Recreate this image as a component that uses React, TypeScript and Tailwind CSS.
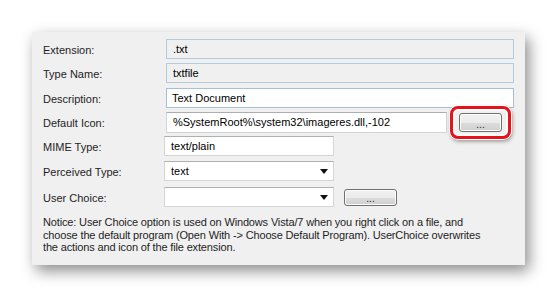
const font = { fontFamily: '"Liberation Sans", Arial, sans-serif' };

function Label({ children }: { children: string }) {
  return <div className="w-[123px] shrink-0 pt-[2px] text-[11px] text-[#1e1e1e]">{children}</div>;
}

function WinButton({ className = "" }: { className?: string }) {
  return (
    <div
      className={`flex items-end justify-center rounded-[3px] border border-[#707070] bg-[linear-gradient(#f2f2f2_0%,#ebebeb_50%,#dddddd_51%,#cfcfcf_100%)] shadow-[inset_0_0_0_1px_#fcfcfc] pb-[1px] text-[10px] leading-none text-[#222] ${className}`}
    >
      ...
    </div>
  );
}

function Arrow() {
  return (
    <svg width="8" height="5" viewBox="0 0 8 5" className="mr-[5px]">
      <path d="M0 0H8L4 5Z" fill="#111" />
    </svg>
  );
}

export default function App() {
  return (
    <div className="h-[298px] w-[557px] overflow-hidden bg-white pl-[32px] pt-[32px]" style={font}>
      <div className="flex h-[233px] w-[493px] flex-col bg-[#f0f0f0] pl-[11px] pt-[7px] shadow-[4px_6px_14px_rgba(0,0,0,0.45)]">
        {/* Extension */}
        <div className="flex h-[20px] items-center">
          <Label>Extension:</Label>
          <div className="flex h-[20px] w-[348px] items-center border border-[#b3cadf] bg-[#f0f0f0] pl-[6px] text-[11px] text-black">.txt</div>
        </div>
        {/* Type Name */}
        <div className="mt-[4px] flex h-[20px] items-center">
          <Label>Type Name:</Label>
          <div className="flex h-[20px] w-[348px] items-center border border-[#b3cadf] bg-[#f0f0f0] pl-[6px] text-[11px] text-black">txtfile</div>
        </div>
        {/* Description */}
        <div className="mt-[5px] flex h-[20px] items-center">
          <Label>Description:</Label>
          <div className="flex h-[20px] w-[348px] items-center border border-[#a7c0d8] bg-white pl-[5px] text-[11px] text-black">Text Document</div>
        </div>
        {/* Default Icon */}
        <div className="mt-[4px] flex h-[20px] items-center">
          <Label>Default Icon:</Label>
          <div className="flex h-[21px] w-[281px] items-center border border-[#cfd3da] border-t-[#abadb3] bg-white pl-[6px] text-[11px] text-black">
            %SystemRoot%\system32\imageres.dll,-102
          </div>
          <div className="-my-[7px] ml-[3px] flex h-[33px] w-[61px] items-center justify-center rounded-[8px] border-[3px] border-[#e8131a] shadow-[inset_0_0_0_2px_#ffffff,0_0_0_1px_#ffffff,1px_2px_4px_rgba(0,0,0,0.45)]">
            <WinButton className="h-[19px] w-[43px]" />
          </div>
        </div>
        {/* MIME Type */}
        <div className="mt-[4px] flex h-[20px] items-center">
          <Label>MIME Type:</Label>
          <div className="-ml-[2px] flex h-[20px] w-[170px] items-center border border-[#d5d5d5] border-t-[#b0b0b0] bg-white pl-[6px] text-[11px] text-black">text/plain</div>
        </div>
        {/* Perceived Type */}
        <div className="mt-[5px] flex h-[20px] items-center">
          <Label>Perceived Type:</Label>
          <div className="-ml-[2px] flex h-[20px] w-[170px] items-center justify-between border border-[#d5d5d5] border-t-[#b0b0b0] bg-white pl-[6px] text-[11px] text-black">
            <span>text</span>
            <Arrow />
          </div>
        </div>
        {/* User Choice */}
        <div className="mt-[6px] flex h-[20px] items-center">
          <Label>User Choice:</Label>
          <div className="-ml-[2px] flex h-[20px] w-[170px] items-center justify-end border border-[#d5d5d5] border-t-[#b0b0b0] bg-white">
            <Arrow />
          </div>
          <WinButton className="ml-[10px] h-[17px] w-[53px]" />
        </div>
        {/* Notice */}
        <p className="mt-[9px] whitespace-nowrap text-[11px] leading-[12.5px] tracking-[-0.15px] text-[#1e1e1e]">
          Notice: User Choice option is used on Windows Vista/7 when you right click on a file, and
          <br />
          choose the default program (Open With -&gt; Choose Default Program). UserChoice overwrites
          <br />
          the actions and icon of the file extension.
        </p>
      </div>
    </div>
  );
}
